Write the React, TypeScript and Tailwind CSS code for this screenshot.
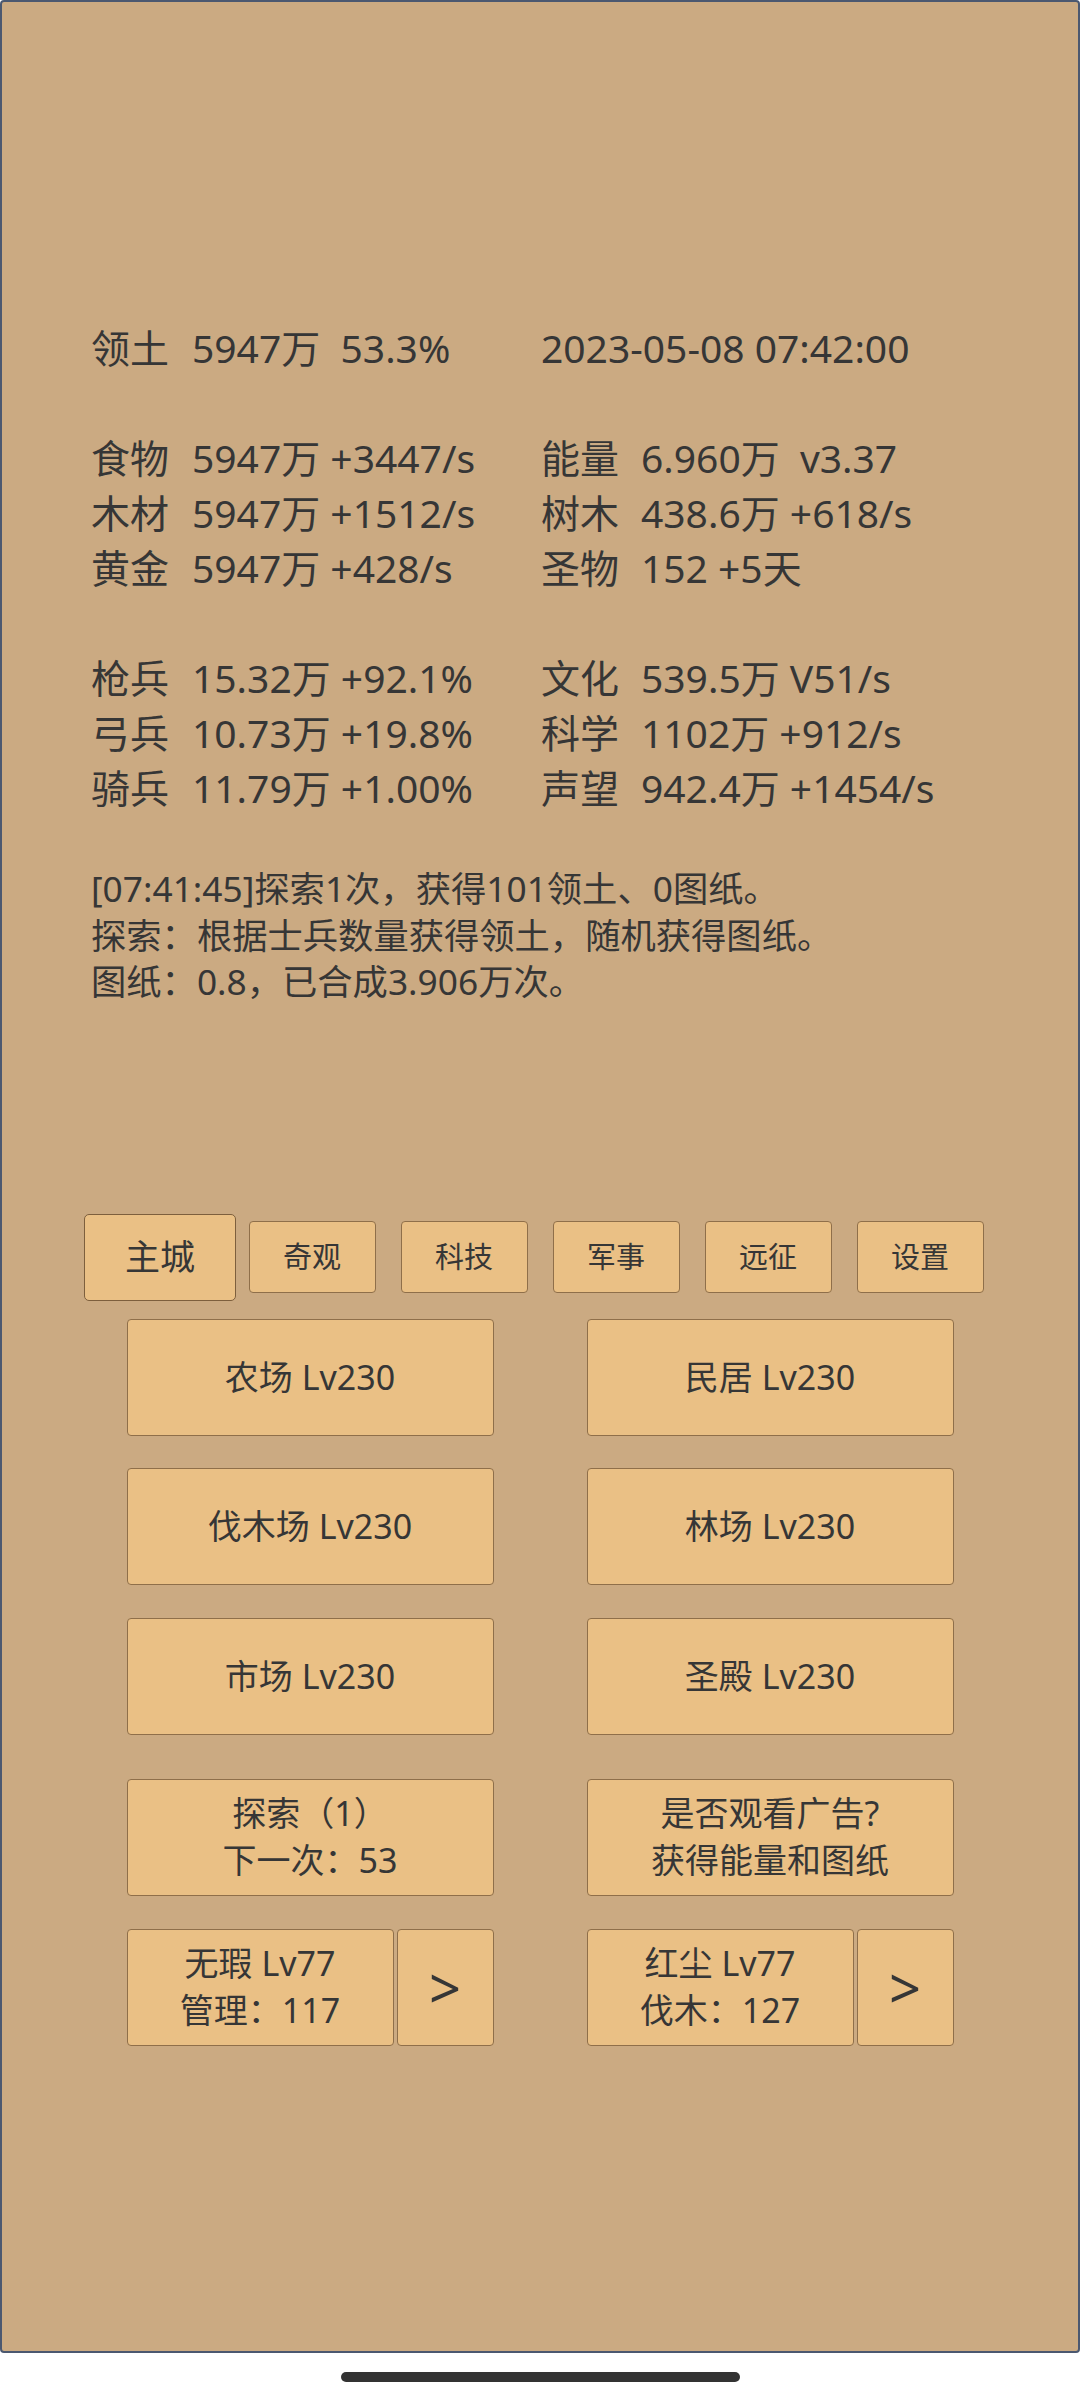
import React from "react";

const leftRows = [
  ["领土", "5947万  53.3%"],
  null,
  ["食物", "5947万 +3447/s"],
  ["木材", "5947万 +1512/s"],
  ["黄金", "5947万 +428/s"],
  null,
  ["枪兵", "15.32万 +92.1%"],
  ["弓兵", "10.73万 +19.8%"],
  ["骑兵", "11.79万 +1.00%"],
];

const rightRows = [
  ["", "2023-05-08 07:42:00"],
  null,
  ["能量", "6.960万  v3.37"],
  ["树木", "438.6万 +618/s"],
  ["圣物", "152 +5天"],
  null,
  ["文化", "539.5万 V51/s"],
  ["科学", "1102万 +912/s"],
  ["声望", "942.4万 +1454/s"],
];

const tabs = ["主城", "奇观", "科技", "军事", "远征", "设置"];

function StatCell({ row, right }: { row: string[] | null; right?: boolean }) {
  if (!row) return <div className="h-[55px]" />;
  if (row[0] === "") {
    return <div className="h-[55px] leading-[55px] whitespace-pre">{row[1]}</div>;
  }
  return (
    <div className="h-[55px] leading-[55px] whitespace-pre">
      <span className={right ? "inline-block w-[100px]" : "inline-block w-[101px]"}>{row[0]}</span>
      {row[1]}
    </div>
  );
}

function Btn({ children, className }: { children: React.ReactNode; className: string }) {
  return (
    <div
      className={
        "flex flex-col items-center justify-center bg-[#EAC085] border border-[#8f6f4a] rounded-[4px] text-[34px] leading-[47px] " +
        className
      }
    >
      {children}
    </div>
  );
}

export default function App() {
  return (
    <div className="w-[1080px] h-[2400px] bg-white flex flex-col font-[family-name:'Noto_Sans','Noto_Sans_CJK_SC',sans-serif] text-[#363636]">
      <div className="h-[2353px] shrink-0 bg-[#CBAA82] border-2 border-[#4b5870] rounded-[4px] flex flex-col">
        {/* stats grid */}
        <div className="pt-[317.5px] pl-[89px] grid grid-cols-[450px_1fr] text-[39px]">
          <div className="flex flex-col">
            {leftRows.map((r, i) => (
              <StatCell key={i} row={r} />
            ))}
          </div>
          <div className="flex flex-col">
            {rightRows.map((r, i) => (
              <StatCell key={i} row={r} right />
            ))}
          </div>
        </div>

        {/* log */}
        <div className="mt-[50.5px] pl-[89px] text-[35.3px] leading-[46.5px] flex flex-col">
          <div>[07:41:45]探索1次，获得101领土、0图纸。</div>
          <div>探索：根据士兵数量获得领土，随机获得图纸。</div>
          <div>图纸：0.8，已合成3.906万次。</div>
        </div>

        {/* tabs */}
        <div className="mt-[209px] h-[87px] flex justify-center items-center">
          {tabs.map((t, i) => (
            <div key={t} className="w-[152px] h-[87px] flex items-center justify-center">
              {i === 0 ? (
                <div className="w-[152px] h-[87px] flex items-center justify-center bg-[#EAC085] border border-[#7d5f3d] rounded-[5px] text-[35px]">
                  {t}
                </div>
              ) : (
                <div className="w-[127px] h-[72px] flex items-center justify-center bg-[#EAC085] border border-[#8f6f4a] rounded-[4px] text-[29px]">
                  {t}
                </div>
              )}
            </div>
          ))}
        </div>

        {/* buildings */}
        <div className="mt-[18px] flex flex-col items-center">
          <div className="flex gap-[93px]">
            <Btn className="w-[367px] h-[117px]">农场 Lv230</Btn>
            <Btn className="w-[367px] h-[117px]">民居 Lv230</Btn>
          </div>
          <div className="mt-[32.5px] flex gap-[93px]">
            <Btn className="w-[367px] h-[117px]">伐木场 Lv230</Btn>
            <Btn className="w-[367px] h-[117px]">林场 Lv230</Btn>
          </div>
          <div className="mt-[32.5px] flex gap-[93px]">
            <Btn className="w-[367px] h-[117px]">市场 Lv230</Btn>
            <Btn className="w-[367px] h-[117px]">圣殿 Lv230</Btn>
          </div>
          <div className="mt-[44px] flex gap-[93px]">
            <Btn className="w-[367px] h-[117px]">
              <div>探索（1）</div>
              <div>下一次：53</div>
            </Btn>
            <Btn className="w-[367px] h-[117px]">
              <div>是否观看广告?</div>
              <div>获得能量和图纸</div>
            </Btn>
          </div>
          <div className="mt-[33px] flex gap-[93px]">
            <div className="w-[367px] h-[117px] flex gap-[3px]">
              <Btn className="w-[267px] h-[117px]">
                <div>无瑕 Lv77</div>
                <div>管理：117</div>
              </Btn>
              <Btn className="w-[97px] h-[117px]">
                <div className="text-[56px] leading-[56px]">&gt;</div>
              </Btn>
            </div>
            <div className="w-[367px] h-[117px] flex gap-[3px]">
              <Btn className="w-[267px] h-[117px]">
                <div>红尘 Lv77</div>
                <div>伐木：127</div>
              </Btn>
              <Btn className="w-[97px] h-[117px]">
                <div className="text-[56px] leading-[56px]">&gt;</div>
              </Btn>
            </div>
          </div>
        </div>
      </div>
      <div className="flex-1 flex items-center justify-center">
        <div className="w-[399px] h-[10px] rounded-full bg-[#333333]" />
      </div>
    </div>
  );
}
